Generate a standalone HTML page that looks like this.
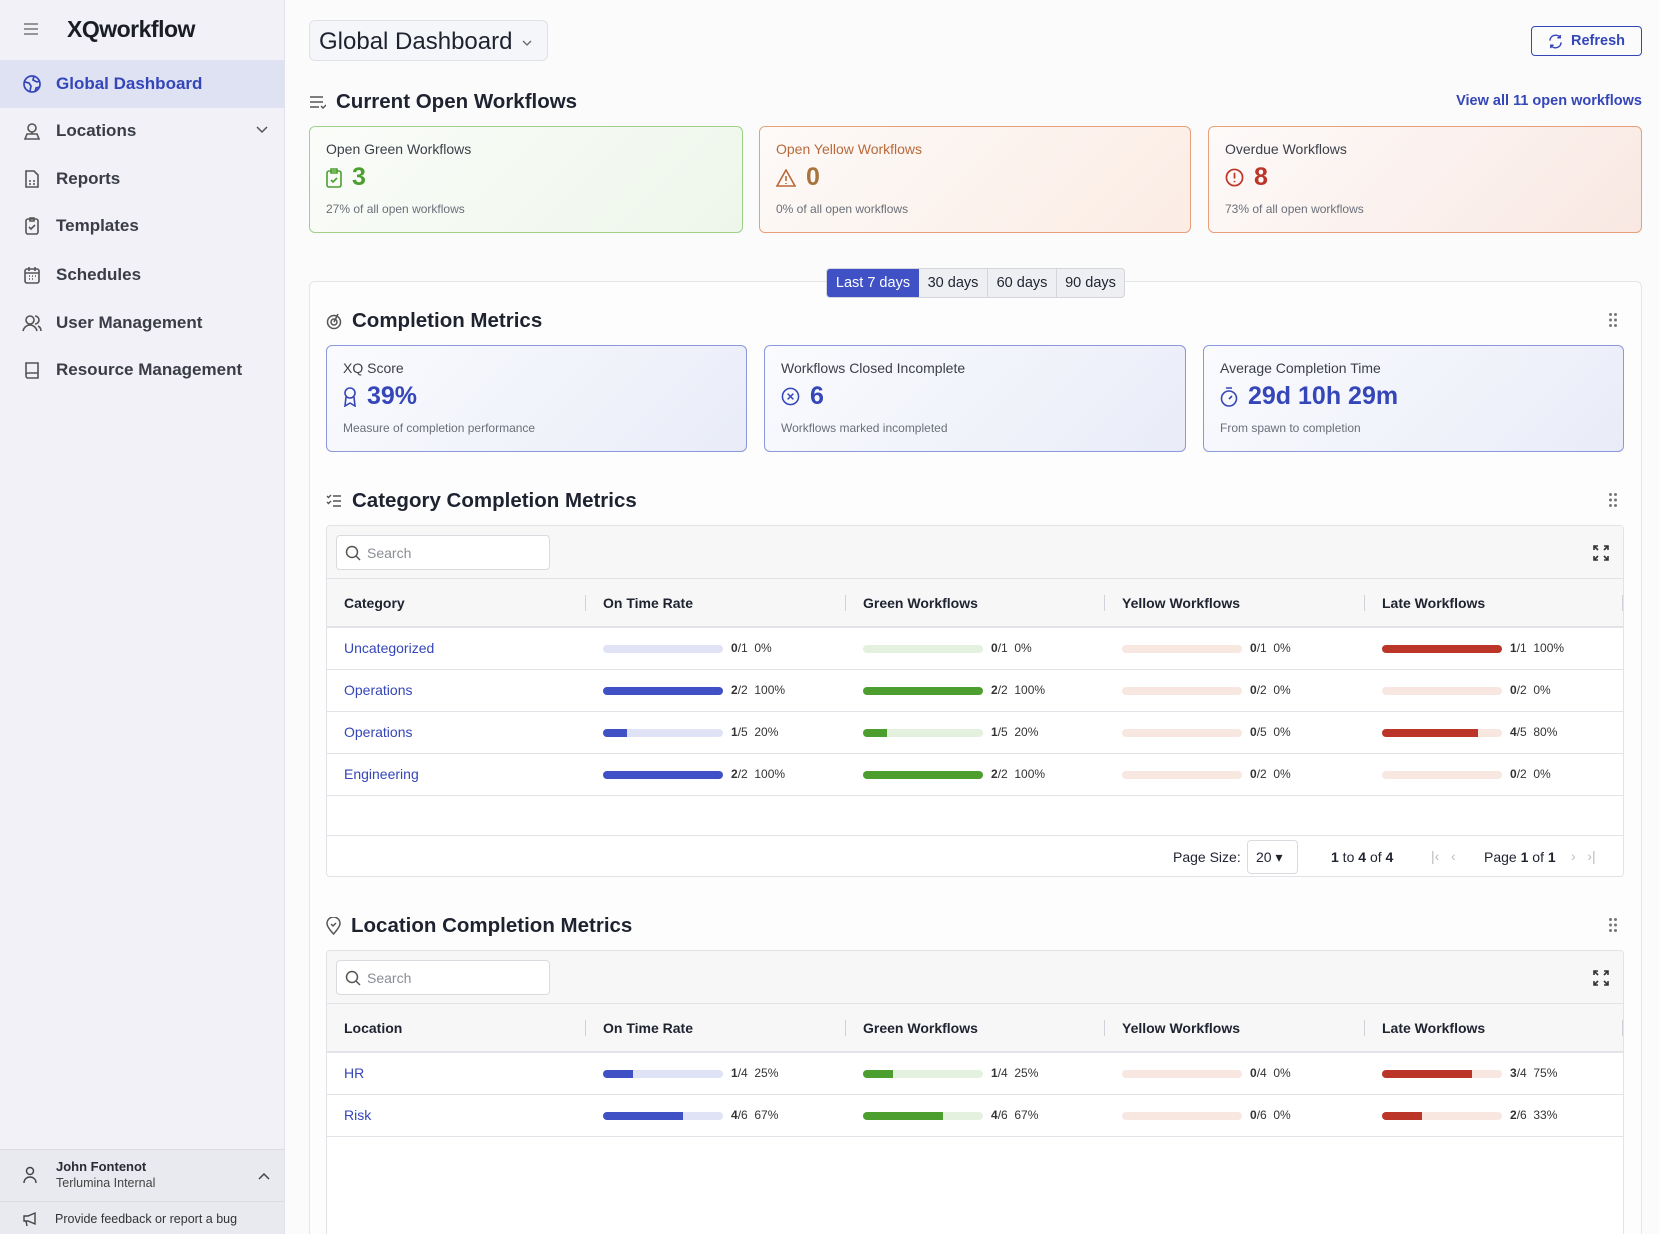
<!DOCTYPE html>
<html><head><meta charset="utf-8"><style>
*{box-sizing:border-box;margin:0;padding:0}
html,body{width:1659px;height:1234px;overflow:hidden}
body{font-family:"Liberation Sans",sans-serif;background:#fbfbfc;color:#1f2330;position:relative}
#wrap{position:relative;width:1659px;height:1234px;overflow:hidden}
.a{position:absolute}
.sb{left:0;top:0;width:285px;height:1234px;background:#f1f1f7;border-right:1px solid #e2e3ea}
.nav{left:0;width:284px;height:46px;display:flex;align-items:center;padding-left:22px;font-size:17px;font-weight:bold;color:#3a3d47}
.nav svg{margin-right:14px}
.card{border-radius:6px;padding:14px 16px}
.lbl{font-size:14px;color:#3c3f48}
.num{font-size:25px;font-weight:bold;display:flex;align-items:center;gap:10px;margin-top:6px}
.sub{font-size:12px;color:#6b6f7a;margin-top:10px}
.h2{font-size:20.5px;font-weight:bold;display:flex;align-items:center;gap:10px;color:#1f2330}
.tbl{background:#fff;border:1px solid #e1e3e8;border-radius:4px}
.tb{background:#f7f7f8;border-bottom:1px solid #e1e3e8}
.srch{background:#fff;border:1px solid #d9dbe0;border-radius:4px;display:flex;align-items:center;padding-left:8px;font-size:14px;color:#8a8d95;gap:6px}
.hdr{background:#f7f7f8;border-bottom:2px solid #e1e3e8;font-size:14px;font-weight:bold;color:#1f2330}
.hc{position:absolute;top:0;height:100%;display:flex;align-items:center}
.sep{position:absolute;width:1px;height:16px;background:#cfd2d8}
.row{border-bottom:1px solid #e1e3e8;font-size:14px}
.lnk{color:#3446b8}
.bar{position:absolute;width:120px;height:8px;border-radius:4px;overflow:hidden}
.bar i{display:block;height:100%}
.bt{position:absolute;font-size:12px;color:#333}
.bt b{font-weight:bold}
</style></head><body><div id="wrap">
<div class="a sb">
 <svg class="a" style="left:23px;top:22px" width="16" height="14"><path d="M1 2h14M1 7h14M1 12h14" stroke="#777" stroke-width="1.6"/></svg>
 <div class="a" style="left:67px;top:16px;font-size:23px;font-weight:bold;color:#1b1d25;letter-spacing:-0.5px">XQworkflow</div>
 <div class="a nav" style="top:60px;height:48px;background:#dfe2f3;color:#3446b8"><svg width="20" height="20" viewBox="0 0 20 20" fill="none" stroke="#3446b8" stroke-width="1.7"><circle cx="10" cy="10" r="8"/><path d="M3 8l4 1 2 3-1 5M12 2l-1 4 4 2 3-1M13 18l1-4 4-1"/></svg>Global Dashboard</div>
 <div class="a nav" style="top:108px"><svg width="20" height="20" viewBox="0 0 20 20" fill="none" stroke="#555" stroke-width="1.6"><circle cx="10" cy="7" r="4"/><path d="M3 18l2-5h10l2 5zM10 11l0 2"/></svg>Locations<svg class="a" style="left:256px;top:18px" width="12" height="8"><path d="M1 1l5 5 5-5" stroke="#555" fill="none" stroke-width="1.5"/></svg></div>
 <div class="a nav" style="top:156px"><svg width="20" height="20" viewBox="0 0 20 20" fill="none" stroke="#555" stroke-width="1.6"><path d="M4 2h8l4 4v12H4z M7 12h2M11 12h2M7 15h2M11 15h2"/></svg>Reports</div>
 <div class="a nav" style="top:203px"><svg width="20" height="20" viewBox="0 0 20 20" fill="none" stroke="#555" stroke-width="1.6"><rect x="4" y="3" width="12" height="15" rx="2"/><path d="M8 2h4v3H8zM7 11l2 2 4-4"/></svg>Templates</div>
 <div class="a nav" style="top:252px"><svg width="20" height="20" viewBox="0 0 20 20" fill="none" stroke="#555" stroke-width="1.6"><rect x="3" y="4" width="14" height="14" rx="2"/><path d="M3 8h14M7 2v4M13 2v4M7 11h1M10 11h1M13 11h1M7 14h1M10 14h1"/></svg>Schedules</div>
 <div class="a nav" style="top:300px"><svg width="20" height="20" viewBox="0 0 20 20" fill="none" stroke="#555" stroke-width="1.6"><circle cx="8" cy="7" r="4"/><path d="M1 18c1-4 4-6 7-6s6 2 7 6M13 3a4 4 0 010 8M16 13c2 1 3 3 3 5"/></svg>User Management</div>
 <div class="a nav" style="top:347px"><svg width="20" height="20" viewBox="0 0 20 20" fill="none" stroke="#555" stroke-width="1.6"><path d="M4 3h12v15H6a2 2 0 01-2-2zM4 15a2 2 0 012-2h10"/></svg>Resource Management</div>
 <div class="a" style="left:0;top:1149px;width:284px;height:53px;background:#e9eaef;border-top:1px solid #dcdde3;border-bottom:1px solid #dcdde3"></div>
 <svg class="a" style="left:22px;top:1166px" width="16" height="18" viewBox="0 0 16 18" fill="none" stroke="#444" stroke-width="1.5"><circle cx="8" cy="5" r="3.5"/><path d="M2 17c0-4 3-6 6-6s6 2 6 6"/></svg>
 <div class="a" style="left:56px;top:1159px;font-size:13px;font-weight:bold;color:#2a2c34">John Fontenot</div>
 <div class="a" style="left:56px;top:1176px;font-size:12.5px;color:#444">Terlumina Internal</div>
 <svg class="a" style="left:258px;top:1172px" width="12" height="8"><path d="M1 7l5-5 5 5" stroke="#444" fill="none" stroke-width="1.5"/></svg>
 <div class="a" style="left:0;top:1202px;width:284px;height:32px;background:#e9eaef"></div>
 <svg class="a" style="left:22px;top:1211px" width="16" height="16" viewBox="0 0 16 16" fill="none" stroke="#444" stroke-width="1.4"><path d="M2 5h4l7-3v11l-7-3H2zM4 10l1 5"/></svg>
 <div class="a" style="left:55px;top:1212px;font-size:12.5px;color:#333">Provide feedback or report a bug</div>
</div>

<div class="a" style="left:309px;top:20px;width:239px;height:41px;border:1px solid #e0e2e8;border-radius:6px;background:#f5f6f9;font-size:24px;padding:7px 0 0 9px;color:#1f2330">Global Dashboard<svg style="margin-left:10px;vertical-align:middle" width="10" height="6"><path d="M1 1l4 4 4-4" stroke="#666" fill="none" stroke-width="1.3"/></svg></div>
<div class="a" style="left:1531px;top:26px;width:111px;height:30px;border:1.5px solid #3446b8;border-radius:4px;color:#3446b8;font-size:14.5px;font-weight:bold;display:flex;align-items:center;justify-content:center;gap:8px"><svg width="15" height="15" viewBox="0 0 16 16" fill="none" stroke="#3446b8" stroke-width="1.6"><path d="M2 7a6 6 0 0111-3M14 9a6 6 0 01-11 3M13 1v3h-3M3 15v-3h3"/></svg>Refresh</div>

<div class="a h2" style="left:309px;top:90px"><svg width="17" height="14" viewBox="0 0 17 14" fill="none" stroke="#555" stroke-width="1.4"><path d="M1 2h13M1 7h13M1 12h9M12 11l2 2 3-3"/></svg>Current Open Workflows</div>
<div class="a" style="right:17px;top:93px;font-size:14.5px;font-weight:bold;color:#3446b8">View all 11 open workflows</div>

<div class="a card" style="left:309px;top:126px;width:434px;height:107px;border:1px solid #9fd08a;background:linear-gradient(135deg,#fafcf9,#eef6ea)">
 <div class="lbl">Open Green Workflows</div>
 <div class="num" style="color:#4c9f2e"><svg width="16" height="20" viewBox="0 0 16 20" fill="none" stroke="#4c9f2e" stroke-width="1.6"><rect x="1" y="3" width="14" height="16" rx="2"/><path d="M5 1h6v4H5zM5 12l2 2 4-4"/></svg>3</div>
 <div class="sub">27% of all open workflows</div></div>
<div class="a card" style="left:759px;top:126px;width:432px;height:107px;border:1px solid #e7a07a;background:linear-gradient(135deg,#fdfaf8,#fbece4)">
 <div class="lbl" style="color:#b8693a">Open Yellow Workflows</div>
 <div class="num" style="color:#a8743c"><svg width="20" height="18" viewBox="0 0 20 18" fill="none" stroke="#b8693a" stroke-width="1.6"><path d="M10 1L19 17H1z M10 7v5M10 14v1"/></svg>0</div>
 <div class="sub">0% of all open workflows</div></div>
<div class="a card" style="left:1208px;top:126px;width:434px;height:107px;border:1px solid #e7a07a;background:linear-gradient(135deg,#fdfaf9,#f9e8e2)">
 <div class="lbl">Overdue Workflows</div>
 <div class="num" style="color:#bb3528"><svg width="19" height="19" viewBox="0 0 20 20" fill="none" stroke="#bb3528" stroke-width="1.8"><circle cx="10" cy="10" r="8.5"/><path d="M10 5v6M10 13.5v1.5"/></svg>8</div>
 <div class="sub">73% of all open workflows</div></div>

<div class="a" style="left:309px;top:281px;width:1333px;height:953px;border:1px solid #e3e5ea;border-bottom:none;border-radius:6px 6px 0 0;background:#fdfdfe"></div>
<div class="a" style="left:826px;top:268px;width:299px;height:30px;display:flex;border-radius:4px;overflow:hidden;font-size:14.5px;border:1px solid #d4d6dc;background:#eeeff2">
 <div style="width:92px;background:#3f51c4;color:#fff;display:flex;align-items:center;justify-content:center">Last 7 days</div>
 <div style="width:69px;display:flex;align-items:center;justify-content:center;border-right:1px solid #d4d6dc">30 days</div>
 <div style="width:69px;display:flex;align-items:center;justify-content:center;border-right:1px solid #d4d6dc">60 days</div>
 <div style="flex:1;display:flex;align-items:center;justify-content:center">90 days</div></div>

<div class="a h2" style="left:326px;top:309px"><svg width="16" height="18" viewBox="0 0 16 18" fill="none" stroke="#555" stroke-width="1.5"><circle cx="8" cy="10" r="6.5"/><circle cx="8" cy="10" r="3"/><path d="M8 10l4-8"/></svg>Completion Metrics</div>
<svg class="a" style="left:1609px;top:313px" width="8" height="14"><g fill="#777"><circle cx="1.5" cy="1.5" r="1.5"/><circle cx="6.5" cy="1.5" r="1.5"/><circle cx="1.5" cy="7" r="1.5"/><circle cx="6.5" cy="7" r="1.5"/><circle cx="1.5" cy="12.5" r="1.5"/><circle cx="6.5" cy="12.5" r="1.5"/></g></svg>

<div class="a card" style="left:326px;top:345px;width:421px;height:107px;border:1px solid #8b98dc;background:linear-gradient(135deg,#fafbfe,#e9ecf8)">
 <div class="lbl">XQ Score</div>
 <div class="num" style="color:#3446b8"><svg width="14" height="20" viewBox="0 0 14 20" fill="none" stroke="#3446b8" stroke-width="1.6"><circle cx="7" cy="6" r="5"/><path d="M3 10l-1 9 5-3 5 3-1-9"/></svg>39%</div>
 <div class="sub">Measure of completion performance</div></div>
<div class="a card" style="left:764px;top:345px;width:422px;height:107px;border:1px solid #8b98dc;background:linear-gradient(135deg,#fafbfe,#e9ecf8)">
 <div class="lbl">Workflows Closed Incomplete</div>
 <div class="num" style="color:#3446b8"><svg width="19" height="19" viewBox="0 0 20 20" fill="none" stroke="#3446b8" stroke-width="1.6"><circle cx="10" cy="10" r="8.5"/><path d="M7 7l6 6M13 7l-6 6"/></svg>6</div>
 <div class="sub">Workflows marked incompleted</div></div>
<div class="a card" style="left:1203px;top:345px;width:421px;height:107px;border:1px solid #8b98dc;background:linear-gradient(135deg,#fafbfe,#e9ecf8)">
 <div class="lbl">Average Completion Time</div>
 <div class="num" style="color:#3446b8"><svg width="18" height="20" viewBox="0 0 18 20" fill="none" stroke="#3446b8" stroke-width="1.6"><circle cx="9" cy="11.5" r="7.5"/><path d="M6 1h6M9 12l3-3"/></svg>29d 10h 29m</div>
 <div class="sub">From spawn to completion</div></div>

<div class="a h2" style="left:326px;top:489px"><svg width="16" height="14" viewBox="0 0 16 14" fill="none" stroke="#555" stroke-width="1.4"><path d="M1 2l1.5 1.5L5 1M1 8l1.5 1.5L5 7M7 2h8M7 7h8M7 12h8"/></svg>Category Completion Metrics</div>
<svg class="a" style="left:1609px;top:493px" width="8" height="14"><g fill="#777"><circle cx="1.5" cy="1.5" r="1.5"/><circle cx="6.5" cy="1.5" r="1.5"/><circle cx="1.5" cy="7" r="1.5"/><circle cx="6.5" cy="7" r="1.5"/><circle cx="1.5" cy="12.5" r="1.5"/><circle cx="6.5" cy="12.5" r="1.5"/></g></svg>

<div id="t1" class="a tbl" style="left:326px;top:525px;width:1298px;height:352px;overflow:hidden">
 <div class="a tb" style="left:0;top:0;width:100%;height:53px"></div>
 <div class="a srch" style="left:9px;top:9px;width:214px;height:35px"><svg width="16" height="16" viewBox="0 0 16 16" fill="none" stroke="#555" stroke-width="1.5"><circle cx="7" cy="7" r="5.5"/><path d="M11 11l4 4"/></svg>Search</div>
 <svg class="a" style="left:1266px;top:19px" width="16" height="16" viewBox="0 0 16 16" fill="none" stroke="#333" stroke-width="1.6"><path d="M1 5V1h4M11 1h4v4M15 11v4h-4M5 15H1v-4M1 1l4 4M15 1l-4 4M15 15l-4-4M1 15l4-4"/></svg>
 <div class="a hdr" style="left:0;top:53px;width:100%;height:49px">
  <div class="hc" style="left:17px">Category</div><div class="sep" style="left:258px;top:16px"></div>
  <div class="hc" style="left:276px">On Time Rate</div><div class="sep" style="left:518px;top:16px"></div>
  <div class="hc" style="left:536px">Green Workflows</div><div class="sep" style="left:777px;top:16px"></div>
  <div class="hc" style="left:795px">Yellow Workflows</div><div class="sep" style="left:1037px;top:16px"></div>
  <div class="hc" style="left:1055px">Late Workflows</div><div class="sep" style="left:1295px;top:16px"></div>
 </div>
 <div class="a" style="left:0;top:309px;width:100%;height:43px;border-top:1px solid #e1e3e8;font-size:14px">
  <div class="a" style="left:846px;top:13px">Page Size:</div>
  <div class="a" style="left:920px;top:4px;width:51px;height:34px;border:1px solid #d9dbe0;border-radius:4px;padding:8px 0 0 8px">20 ▾</div>
  <div class="a" style="left:1004px;top:13px"><b>1</b> to <b>4</b> of <b>4</b></div>
  <div class="a" style="left:1104px;top:12px;color:#bbb">|‹ &nbsp;&nbsp;‹</div>
  <div class="a" style="left:1157px;top:13px">Page <b>1</b> of <b>1</b></div>
  <div class="a" style="left:1244px;top:12px;color:#bbb">› &nbsp;&nbsp;›|</div>
 </div>
</div>

<div class="a h2" style="left:326px;top:914px"><svg width="15" height="18" viewBox="0 0 15 18" fill="none" stroke="#555" stroke-width="1.5"><path d="M7.5 17C3 12 1 9 1 6.5a6.5 6.5 0 0113 0C14 9 12 12 7.5 17z"/><path d="M5 7l2 2 3-3"/></svg>Location Completion Metrics</div>
<svg class="a" style="left:1609px;top:918px" width="8" height="14"><g fill="#777"><circle cx="1.5" cy="1.5" r="1.5"/><circle cx="6.5" cy="1.5" r="1.5"/><circle cx="1.5" cy="7" r="1.5"/><circle cx="6.5" cy="7" r="1.5"/><circle cx="1.5" cy="12.5" r="1.5"/><circle cx="6.5" cy="12.5" r="1.5"/></g></svg>

<div id="t2" class="a tbl" style="left:326px;top:950px;width:1298px;height:284px;overflow:hidden;border-bottom:none;border-radius:4px 4px 0 0">
 <div class="a tb" style="left:0;top:0;width:100%;height:53px"></div>
 <div class="a srch" style="left:9px;top:9px;width:214px;height:35px"><svg width="16" height="16" viewBox="0 0 16 16" fill="none" stroke="#555" stroke-width="1.5"><circle cx="7" cy="7" r="5.5"/><path d="M11 11l4 4"/></svg>Search</div>
 <svg class="a" style="left:1266px;top:19px" width="16" height="16" viewBox="0 0 16 16" fill="none" stroke="#333" stroke-width="1.6"><path d="M1 5V1h4M11 1h4v4M15 11v4h-4M5 15H1v-4M1 1l4 4M15 1l-4 4M15 15l-4-4M1 15l4-4"/></svg>
 <div class="a hdr" style="left:0;top:53px;width:100%;height:49px">
  <div class="hc" style="left:17px">Location</div><div class="sep" style="left:258px;top:16px"></div>
  <div class="hc" style="left:276px">On Time Rate</div><div class="sep" style="left:518px;top:16px"></div>
  <div class="hc" style="left:536px">Green Workflows</div><div class="sep" style="left:777px;top:16px"></div>
  <div class="hc" style="left:795px">Yellow Workflows</div><div class="sep" style="left:1037px;top:16px"></div>
  <div class="hc" style="left:1055px">Late Workflows</div><div class="sep" style="left:1295px;top:16px"></div>
 </div>
</div>
</div>
<script>
function rows(id,top,data){
 var t=document.getElementById(id),h='';
 var bg=['#dfe3f5','#e4f1de','#f8e7e1','#f8e7e1'],fg=['#3f51c4','#4c9f2e','#e9a88a','#bb3528'],xs=[276,536,795,1055];
 data.forEach(function(r,i){
  var y=top+i*42;
  h+='<div class="a row" style="left:0;top:'+y+'px;width:100%;height:42px"><div class="a lnk" style="left:17px;top:12px">'+r[0]+'</div>';
  for(var c=0;c<4;c++){var v=r[c+1],p=Math.round(v[0]/v[1]*100);
   h+='<div class="bar" style="left:'+xs[c]+'px;top:17px;background:'+bg[c]+'"><i style="width:'+p+'%;background:'+fg[c]+'"></i></div>';
   h+='<div class="bt" style="left:'+(xs[c]+128)+'px;top:13px"><b>'+v[0]+'</b>/'+v[1]+'&nbsp; '+p+'%</div>';}
  h+='</div>';});
 t.insertAdjacentHTML('beforeend',h);
}
rows('t1',102,[['Uncategorized',[0,1],[0,1],[0,1],[1,1]],['Operations',[2,2],[2,2],[0,2],[0,2]],['Operations',[1,5],[1,5],[0,5],[4,5]],['Engineering',[2,2],[2,2],[0,2],[0,2]]]);
rows('t2',102,[['HR',[1,4],[1,4],[0,4],[3,4]],['Risk',[4,6],[4,6],[0,6],[2,6]]]);
</script>
</body></html>
